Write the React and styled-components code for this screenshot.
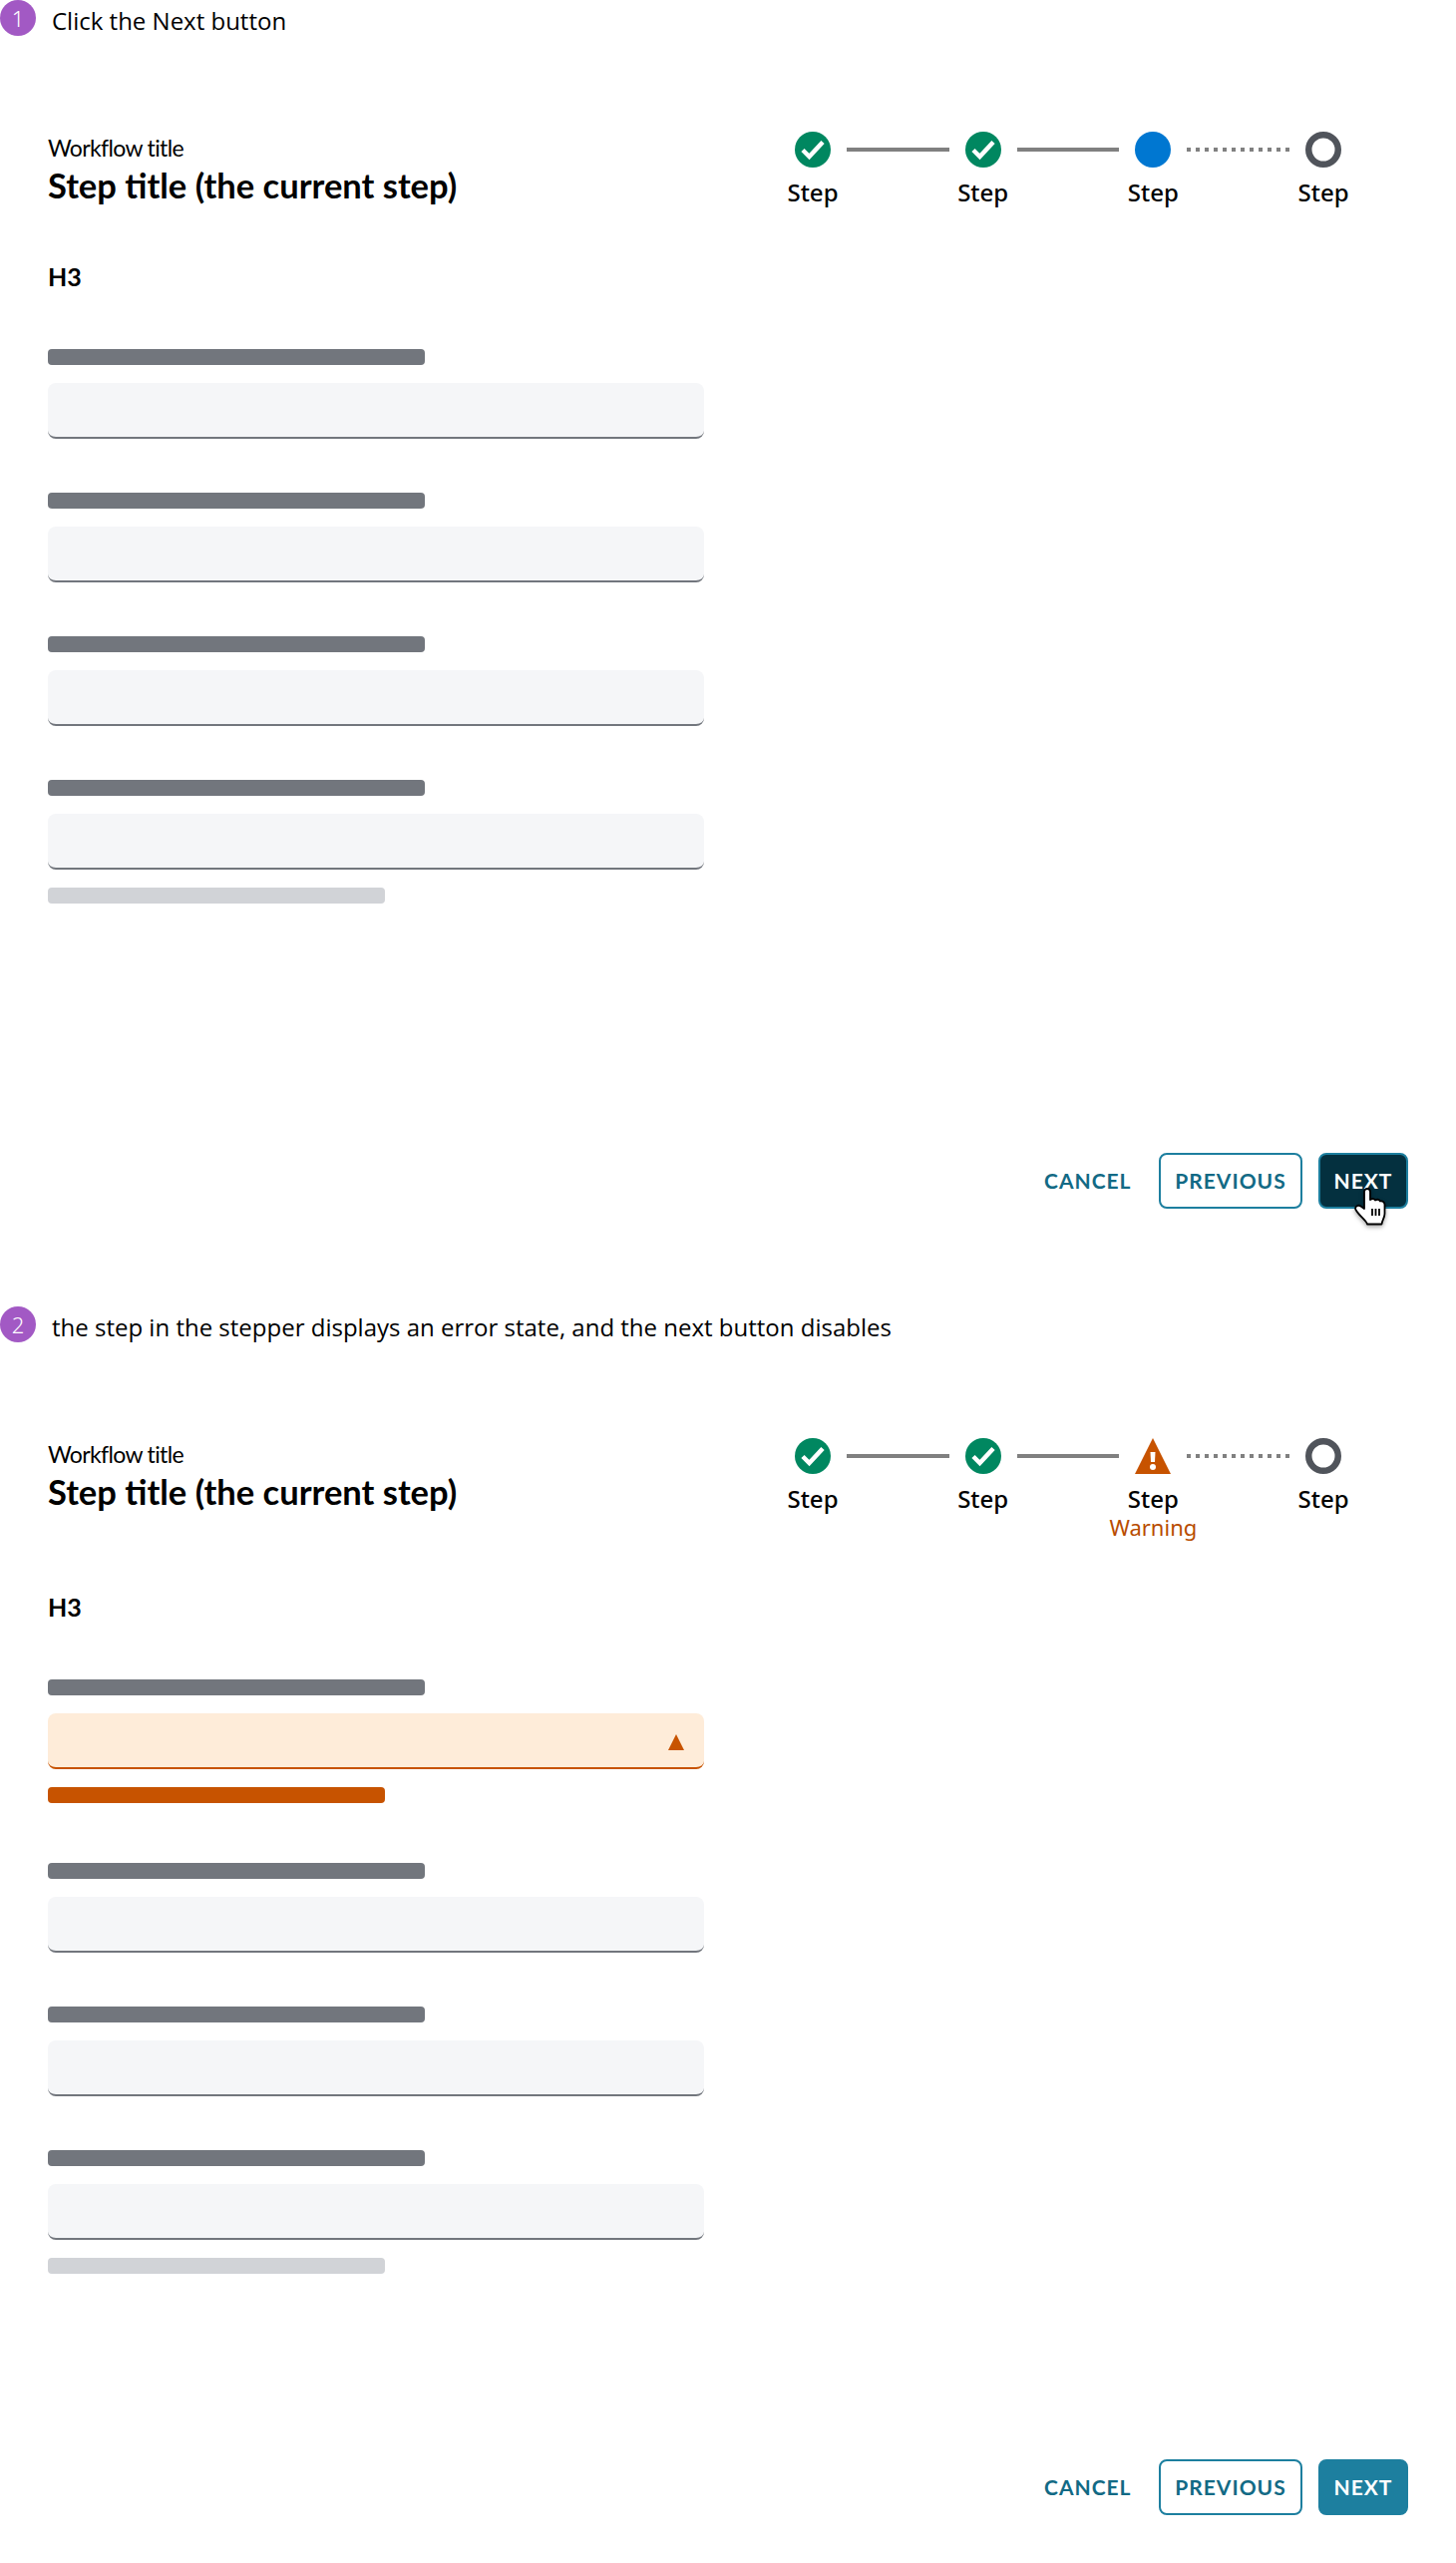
import styled, { createGlobalStyle } from 'styled-components'

const GlobalStyle = createGlobalStyle`
  body {
    margin: 0;
    background: #fff;
    color: #000;
    font-family: "Noto Sans", sans-serif;
  }
`;

const Section = styled.section`
  position: relative;
  display: flex;
  flex-direction: column;
  width: 1460px;
  height: 1212px;
  margin-bottom: 98px;

  &:last-child {
    margin-bottom: 48px;
  }
`;

const Note = styled.div`
  display: flex;
  align-items: flex-start;
  gap: 16px;
  height: 36px;
`;

const NoteNumber = styled.span`
  display: flex;
  align-items: center;
  justify-content: center;
  width: 36px;
  height: 36px;
  border-radius: 50%;
  background: #a259c4;
  color: #fff;
  font-size: 22px;
  font-weight: 300;
`;

const NoteText = styled.span`
  font-family: "Open Sans", sans-serif;
  font-size: 24px;
  line-height: 42px;
`;

const Header = styled.header`
  display: flex;
  justify-content: space-between;
  align-items: flex-start;
  margin: 96px 115px 0 48px;
`;

const Titles = styled.div`
  display: flex;
  flex-direction: column;
`;

const WorkflowTitle = styled.div`
  font-family: "Lato", sans-serif;
  font-size: 23px;
  line-height: 32px;
  letter-spacing: -0.65px;
`;

const StepTitle = styled.h1`
  margin: -1px 0 0;
  font-family: "Lato", sans-serif;
  font-size: 34.5px;
  line-height: 46px;
  font-weight: 700;
`;

const Stepper = styled.div`
  display: flex;
  align-items: flex-start;
  width: 548px;
`;

const Step = styled.div`
  display: flex;
  flex-direction: column;
  align-items: center;
  width: 36px;
  flex: none;
`;

const StepIcon = styled.svg`
  display: block;
  width: 36px;
  height: 36px;
`;

const StepLabel = styled.span`
  margin-top: 9px;
  font-size: 24px;
  font-weight: 500;
  line-height: 32px;
  white-space: nowrap;
`;

const StepWarning = styled.span`
  font-size: 22px;
  line-height: 24px;
  color: #b84c00;
  white-space: nowrap;
`;

const Connector = styled.div`
  flex: 1;
  height: 4px;
  margin: 16px 16px 0;
  background: ${p => p.$dotted
    ? 'repeating-linear-gradient(90deg, #808080 0 4px, transparent 4px 8.97px)'
    : '#808080'};
`;

const Form = styled.div`
  display: flex;
  flex-direction: column;
  margin: 52px 0 0 48px;
`;

const SectionHeading = styled.h3`
  margin: 0 0 57px;
  font-family: "Lato", sans-serif;
  font-size: 25px;
  line-height: 32px;
  font-weight: 700;
`;

const Field = styled.div`
  display: flex;
  flex-direction: column;
  margin-bottom: 54px;
`;

const LabelBar = styled.div`
  width: 378px;
  height: 16px;
  border-radius: 4px;
  background: #72767d;
`;

const Input = styled.div`
  display: flex;
  align-items: center;
  justify-content: flex-end;
  box-sizing: border-box;
  width: 658px;
  height: 56px;
  margin-top: 18px;
  padding: 4px 20px 0 0;
  border-radius: 8px;
  border-bottom: 2px solid ${p => (p.$error ? '#c75300' : '#72767d')};
  background: ${p => (p.$error ? '#feecd9' : '#f5f6f8')};
`;

const HelperBar = styled.div`
  width: 338px;
  height: 16px;
  margin-top: 18px;
  margin-bottom: ${p => (p.$error ? '6px' : '0')};
  border-radius: 4px;
  background: ${p => (p.$error ? '#c75300' : '#d1d3d7')};
`;

const Footer = styled.footer`
  display: flex;
  align-items: center;
  margin-top: auto;
  padding-right: 48px;
  justify-content: flex-end;
`;

const Button = styled.button`
  box-sizing: border-box;
  height: 56px;
  border-radius: 8px;
  font-family: "Lato", sans-serif;
  font-size: 21px;
  font-weight: 700;
  letter-spacing: 1px;
  padding: 0 0 2px;
  border: 2px solid #1d7f9f;
  background: #fff;
  color: #126a85;
`;

const CancelButton = styled(Button)`
  border-color: transparent;
  background: transparent;
  width: 84px;
  margin-right: 33px;
`;

const PreviousButton = styled(Button)`
  width: 144px;
  margin-right: 16px;
`;

const NextButton = styled(Button)`
  width: 90px;
  color: #fff;
  background: ${p => (p.$pressed ? '#04303f' : '#1d7f9f')};
`;

const NextWrap = styled.div`
  position: relative;
  display: flex;
`;

const Cursor = styled.svg`
  position: absolute;
  left: 36px;
  top: 35px;
  width: 32px;
  height: 38px;
  filter: drop-shadow(0 2px 2px rgba(0, 0, 0, 0.35));
`;

const CheckIcon = () => (
  <StepIcon viewBox="0 0 36 36">
    <circle cx="18" cy="18" r="18" fill="#008760" />
    <path d="M8 18.5 L14.5 25 L28 10.5" fill="none" stroke="#fff" strokeWidth="4.5" />
  </StepIcon>
);

const CurrentIcon = () => (
  <StepIcon viewBox="0 0 36 36">
    <circle cx="18" cy="18" r="18" fill="#0077d1" />
  </StepIcon>
);

const TodoIcon = () => (
  <StepIcon viewBox="0 0 36 36">
    <circle cx="18" cy="18" r="14.75" fill="none" stroke="#50545b" strokeWidth="6.5" />
  </StepIcon>
);

const WarningIcon = () => (
  <StepIcon viewBox="0 0 36 36">
    <path d="M18 0 L36 36 H0 Z" fill="#c75300" />
    <path d="M15.5 14 H20.5 L20 24 H16 Z" fill="#fff" />
    <circle cx="18" cy="29" r="3" fill="#fff" />
  </StepIcon>
);

const HandCursor = () => (
  <Cursor viewBox="0 0 32 38">
    <path
      d="M10 4 a3 3 0 0 1 6 0 V12 c2 -1.5 4 -1 5 .5 c2 -1.2 4 -.6 5 1 c2.2 -.6 4.5 .6 4.5 3.5 V26 c0 4 -2.5 6 -3 10.5 H13 c-1 -4 -8 -8 -11.5 -14.5 c-1.5 -3 2.5 -5.5 5 -3.5 L10 21 Z"
      fill="#fff"
      stroke="#000"
      strokeWidth="1.8"
      strokeLinejoin="round"
    />
    <path d="M18 21 V28 M21.5 21 V28 M25 21 V28" stroke="#000" strokeWidth="1.8" fill="none" />
  </Cursor>
);

const WorkflowStepper = ({ warning }) => (
  <Stepper>
    <Step>
      <CheckIcon />
      <StepLabel>Step</StepLabel>
    </Step>
    <Connector />
    <Step>
      <CheckIcon />
      <StepLabel>Step</StepLabel>
    </Step>
    <Connector />
    <Step>
      {warning ? <WarningIcon /> : <CurrentIcon />}
      <StepLabel>Step</StepLabel>
      {warning && <StepWarning>Warning</StepWarning>}
    </Step>
    <Connector $dotted />
    <Step>
      <TodoIcon />
      <StepLabel>Step</StepLabel>
    </Step>
  </Stepper>
);

const Workflow = ({ number, note, error, pressed }) => (
  <Section>
    <Note>
      <NoteNumber>{number}</NoteNumber>
      <NoteText>{note}</NoteText>
    </Note>
    <Header>
      <Titles>
        <WorkflowTitle>Workflow title</WorkflowTitle>
        <StepTitle>Step title (the current step)</StepTitle>
      </Titles>
      <WorkflowStepper warning={error} />
    </Header>
    <Form>
      <SectionHeading>H3</SectionHeading>
      <Field>
        <LabelBar />
        <Input $error={error}>
          {error && (
            <svg width="16" height="16" viewBox="0 0 16 16">
              <path d="M8 0 L16 16 H0 Z" fill="#c75300" />
            </svg>
          )}
        </Input>
        {error && <HelperBar $error />}
      </Field>
      <Field>
        <LabelBar />
        <Input />
      </Field>
      <Field>
        <LabelBar />
        <Input />
      </Field>
      <Field>
        <LabelBar />
        <Input />
        <HelperBar />
      </Field>
    </Form>
    <Footer>
      <CancelButton>CANCEL</CancelButton>
      <PreviousButton>PREVIOUS</PreviousButton>
      <NextWrap>
        <NextButton $pressed={pressed}>NEXT</NextButton>
        {pressed && <HandCursor />}
      </NextWrap>
    </Footer>
  </Section>
);

export default function App() {
  return (
    <>
      <GlobalStyle />
      <Workflow number="1" note="Click the Next button" pressed />
      <Workflow
        number="2"
        note="the step in the stepper displays an error state, and the next button disables"
        error
      />
    </>
  );
}
